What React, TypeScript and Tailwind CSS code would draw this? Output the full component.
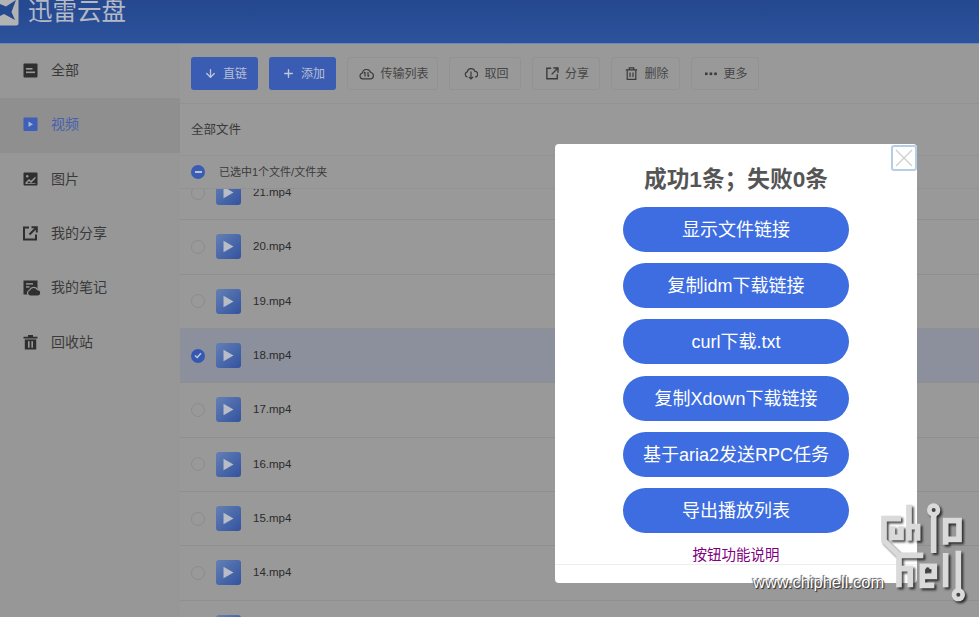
import type { ReactNode } from "react";
import { ArrowDown, Plus } from "lucide-react";

const cjk = "font-['Liberation_Sans','Noto_Sans_CJK_SC',sans-serif]";

function BoardIcon() {
  return (
    <svg width="15" height="15" viewBox="0 0 15 15">
      <rect x="0.5" y="0.5" width="14" height="14" rx="1" fill="#2f2f2f" />
      <rect x="3" y="5" width="6.5" height="1.6" fill="#9a9a9a" />
      <rect x="3" y="8.5" width="9" height="1.6" fill="#9a9a9a" />
    </svg>
  );
}

function VideoIcon() {
  return (
    <svg width="15" height="15" viewBox="0 0 15 15">
      <rect x="0.5" y="0.5" width="14" height="13.5" rx="1" fill="#3f5fb8" />
      <path d="M5.5 4.5 10 7.3 5.5 10z" fill="#a9b4d2" />
    </svg>
  );
}

function ImageIcon() {
  return (
    <svg width="15" height="15" viewBox="0 0 15 15">
      <rect x="0.5" y="0.5" width="14" height="13" rx="1" fill="#2f2f2f" />
      <path d="M2.5 10.5 6 7l2 1.8L12.5 4.5v2L8 11 6 9l-2 2.2h8.5V12h-10z" fill="#9a9a9a" />
      <circle cx="4.2" cy="4.2" r="1.2" fill="#9a9a9a" />
    </svg>
  );
}

function ShareIcon({ size = 15, color = "#2f2f2f", sw = 2 }: { size?: number; color?: string; sw?: number }) {
  return (
    <svg width={size} height={size} viewBox="0 0 15 15" fill="none" stroke={color} strokeWidth={sw}>
      <path d="M6 1.5H1v12h12V8.5" />
      <path d="M6.5 8.5 13 2M8.5 1.2H13.8V6.5" />
    </svg>
  );
}

function NoteIcon() {
  return (
    <svg width="18" height="16" viewBox="0 0 18 16">
      <path d="M0.5 0.5H14.5V14.5H0.5z" fill="#2f2f2f" />
      <rect x="3" y="3.2" width="7" height="1.4" fill="#9a9a9a" />
      <rect x="3" y="6.2" width="3.5" height="1.4" fill="#9a9a9a" />
      <path
        d="M7 16a3 3 0 0 1-.5-5.8A4.5 4.5 0 0 1 14.5 9.6 3.2 3.2 0 0 1 14.6 16z"
        fill="#2f2f2f"
        stroke="#979797"
        strokeWidth="1.2"
      />
    </svg>
  );
}

function BinIcon() {
  return (
    <svg width="15" height="16" viewBox="0 0 15 16">
      <path d="M0.5 2.8H5V1h5v1.8h4.5v1.6H.5z" fill="#2f2f2f" />
      <path d="M1.8 5.4h11.4V15.5H1.8z" fill="#2f2f2f" />
      <rect x="5" y="7.2" width="1.6" height="6.5" fill="#9a9a9a" />
      <rect x="8.4" y="7.2" width="1.6" height="6.5" fill="#9a9a9a" />
    </svg>
  );
}

function TransferIcon() {
  return (
    <svg width="15" height="13" viewBox="0 0 15 13" fill="none" stroke="#3a3a3a" strokeWidth="1.2">
      <path d="M3.6 11.8a2.9 2.9 0 0 1-.4-5.7 4.4 4.4 0 0 1 8.5-.6 3.2 3.2 0 0 1 .1 6.3z" />
      <path d="M6 5v4.5M4.8 6.2 6 5M9 9.5V5M9 9.5l1.2-1.2" />
    </svg>
  );
}

function FetchIcon() {
  return (
    <svg width="14" height="13" viewBox="0 0 14 13" fill="none" stroke="#3a3a3a" strokeWidth="1.2">
      <path d="M3.5 10a2.6 2.6 0 0 1-.3-5.1 4 4 0 0 1 7.7-.5 2.8 2.8 0 0 1 .1 5.6" />
      <path d="M7 4.5v7.5M4.8 9.8 7 12l2.2-2.2" />
    </svg>
  );
}

function SmallBinIcon() {
  return (
    <svg width="13" height="13" viewBox="0 0 13 13" fill="none" stroke="#3a3a3a" strokeWidth="1.2">
      <path d="M0.8 2.8h11.4M4.3 2.6V.9h4.4v1.7M2.2 2.8v9.5h8.6V2.8M5 5.5v4.5M8 5.5v4.5" />
    </svg>
  );
}

function MoreIcon() {
  return (
    <svg width="12" height="4" viewBox="0 0 12 4" fill="#3a3a3a">
      <rect x="0" y="0.5" width="2.6" height="2.6" />
      <rect x="4.6" y="0.5" width="2.6" height="2.6" />
      <rect x="9.2" y="0.5" width="2.6" height="2.6" />
    </svg>
  );
}

function Thumb() {
  return (
    <div className="flex h-[25px] w-[25px] items-center justify-center rounded-[3px] bg-gradient-to-br from-[#6480b4] to-[#33529f]">
      <svg width="11" height="13" viewBox="0 0 11 13">
        <path d="M0.5 0.8 10.5 6.5.5 12.2z" fill="#b7bcc6" />
      </svg>
    </div>
  );
}

function ChipHellLogo() {
  return (
    <svg
      viewBox="0 0 300 330"
      className="absolute left-[875px] top-[498px] z-30 h-[110px] w-[100px] drop-shadow-[2px_2px_1px_rgba(0,0,0,0.7)]"
      fill="none"
      stroke="#dadada"
      strokeWidth="17"
    >
      <path d="M78 62H27V128L72 172H145" />
      <path d="M52 85V118H78V85" />
      <path d="M102 20V128" />
      <path d="M102 86H128V128" />
      <circle cx="176" cy="36" r="20" fill="#dadada" stroke="none" />
      <circle cx="176" cy="36" r="6" fill="#444444" stroke="none" />
      <path d="M176 52V165" />
      <path d="M212 140V68H252V124H214" />
      <path d="M72 176V268" />
      <path d="M72 212H106V268" />
      <path d="M178 262H142V205H178V235H145" />
      <circle cx="158" cy="214" r="6" fill="#444444" stroke="none" />
      <path d="M212 165V268" />
      <path d="M250 158V280" />
      <circle cx="250" cy="290" r="20" fill="#dadada" stroke="none" />
      <circle cx="250" cy="290" r="6" fill="#444444" stroke="none" />
    </svg>
  );
}

const navItems: { label: string; icon: ReactNode; active?: boolean }[] = [
  { label: "全部", icon: <BoardIcon /> },
  { label: "视频", icon: <VideoIcon />, active: true },
  { label: "图片", icon: <ImageIcon /> },
  { label: "我的分享", icon: <ShareIcon /> },
  { label: "我的笔记", icon: <NoteIcon /> },
  { label: "回收站", icon: <BinIcon /> },
];

const toolButtons = [
  { label: "传输列表", icon: <TransferIcon />, width: "w-[91px]" },
  { label: "取回", icon: <FetchIcon />, width: "w-[72px]" },
  { label: "分享", icon: <ShareIcon size={13} color="#3a3a3a" sw={1.6} />, width: "w-[68px]" },
  { label: "删除", icon: <SmallBinIcon />, width: "w-[69px]" },
  { label: "更多", icon: <MoreIcon />, width: "w-[68px]" },
];

// the last row only peeks in at the bottom, its name is below the fold
const files = ["21.mp4", "20.mp4", "19.mp4", "18.mp4", "17.mp4", "16.mp4", "15.mp4", "14.mp4", ""];

const actions = ["显示文件链接", "复制idm下载链接", "curl下载.txt", "复制Xdown下载链接", "基于aria2发送RPC任务", "导出播放列表"];

export default function App() {
  return (
    <div className={`relative flex h-[617px] w-full flex-col overflow-hidden bg-[#999999] ${cjk}`}>
      <header className="flex h-[44px] shrink-0 items-start gap-[9px] overflow-hidden border-b border-[#6f87b5] bg-gradient-to-b from-[#25488f] to-[#2c539d]">
        <svg width="19" height="26" viewBox="0 0 19 26" className="shrink-0">
          <rect x="-6" y="-6" width="24.5" height="31.5" rx="2.5" fill="#b3b3b3" />
          <path d="M16 0 6 6.5 0 4v12l4-2 11 6-3.5-8z" fill="#24498f" />
        </svg>
        <span className="-mt-[6px] text-[24.5px] leading-[36px] text-[#b4b9c6]">迅雷云盘</span>
      </header>

      <div className="flex min-h-0 flex-1">
        <aside className="w-[180px] shrink-0 bg-[#979797]">
          {navItems.map((item) => (
            <div
              key={item.label}
              className={`flex h-[54.33px] items-center pb-[1px] pl-[23px] text-[14px] ${item.active ? "bg-[#8f8f8f] text-[#4660b0]" : "text-[#3a3a3a]"}`}
            >
              <span className="flex w-[28px] items-center">{item.icon}</span>
              {item.label}
            </div>
          ))}
        </aside>

        <main className="flex min-w-0 flex-1 flex-col">
          <div className="flex h-[60px] shrink-0 items-center gap-[11px] border-b border-[#929292] pl-[11px] text-[12px]">
            <button className="flex h-[33px] w-[67px] items-center justify-center gap-[6px] rounded-[3px] bg-[#3b5cb3] pl-[2px] text-[#b7bfd4]">
              <ArrowDown size={13} strokeWidth={2.4} color="#c0c6d6" />
              直链
            </button>
            <button className="flex h-[33px] w-[67px] items-center justify-center gap-[6px] rounded-[3px] bg-[#3b5cb3] pl-[2px] text-[#b7bfd4]">
              <Plus size={13} strokeWidth={2.6} color="#c0c6d6" />
              添加
            </button>
            {toolButtons.map((b) => (
              <button
                key={b.label}
                className={`flex h-[33px] items-center justify-center gap-[6px] rounded-[3px] border border-[#929292] pl-[3px] text-[#454545] ${b.width}`}
              >
                {b.icon}
                {b.label}
              </button>
            ))}
          </div>

          <div className="flex h-[52px] shrink-0 items-center border-b border-[#929292] pl-[11px] pt-[2px] text-[12.5px] text-[#3a3a3a]">
            全部文件
          </div>

          <div className="relative z-10 flex h-[33px] shrink-0 items-center gap-[14px] border-b border-[#929292] bg-[#999999] pl-[11px] text-[11px] text-[#3a3a3a]">
            <span className="flex h-[14px] w-[14px] items-center justify-center rounded-full bg-[#3b5cb3]">
              <span className="h-[1.5px] w-[7px] bg-[#b9c1d6]" />
            </span>
            已选中1个文件/文件夹
          </div>

          <div className="-mt-[23px]">
            {files.map((name, i) => {
              const selected = name === "18.mp4";
              return (
                <div
                  key={i}
                  className={`flex h-[54.33px] items-center border-b border-[#8f8f8f] pl-[11px] text-[11.5px] text-[#2b2b2b] ${selected ? "bg-[#8b909c]" : ""}`}
                >
                  {selected ? (
                    <span className="flex h-[14px] w-[14px] items-center justify-center rounded-full bg-[#3559b3]">
                      <svg width="8" height="7" viewBox="0 0 8 7" fill="none" stroke="#c5cbdc" strokeWidth="1.4">
                        <path d="M1 3.5 3.2 5.5 7 1.2" />
                      </svg>
                    </span>
                  ) : (
                    <span className="h-[14px] w-[14px] rounded-full border-[1.5px] border-[#8c8c8c]" />
                  )}
                  <span className="ml-[11px] mr-[12px]">
                    <Thumb />
                  </span>
                  {name}
                </div>
              );
            })}
          </div>
        </main>
      </div>

      {/* dialog on top of the dimmed page */}
      <div className="absolute left-[555px] top-[144px] z-20 flex h-[439px] w-[362px] flex-col items-center rounded-[4px] bg-white pt-[19px]">
        <button className="absolute right-0 top-[1px] flex h-[26px] w-[26px] items-center justify-center rounded-[3px] border-2 border-[#b6cde8] bg-white">
          <svg width="18" height="18" viewBox="0 0 18 18" stroke="#cfcfcf" strokeWidth="1.3">
            <path d="M1 1 17 17M17 1 1 17" />
          </svg>
        </button>
        <h2 className="h-[33px] text-[22.7px] font-bold leading-[33px] text-[#555555]">成功1条；失败0条</h2>
        <div className="mt-[11px] flex flex-col gap-[11.2px]">
          {actions.map((a) => (
            <button key={a} className="flex h-[45px] w-[226px] items-center justify-center rounded-full bg-[#3d6de0] pt-[2px] text-[18px] text-white">
              {a}
            </button>
          ))}
        </div>
        <a className="mt-[12.5px] text-[14.5px] leading-[21px] text-[#800080]">按钮功能说明</a>
        <div className="mt-[-2px] h-px w-full bg-[#eeeeee]" />
      </div>

      <ChipHellLogo />
      <span className="absolute left-[753px] top-[572px] z-30 text-[16.5px] leading-[20px] text-white [text-shadow:1px_1px_1px_#222,-1px_-1px_1px_#555]">
        www.chiphell.com
      </span>
    </div>
  );
}
